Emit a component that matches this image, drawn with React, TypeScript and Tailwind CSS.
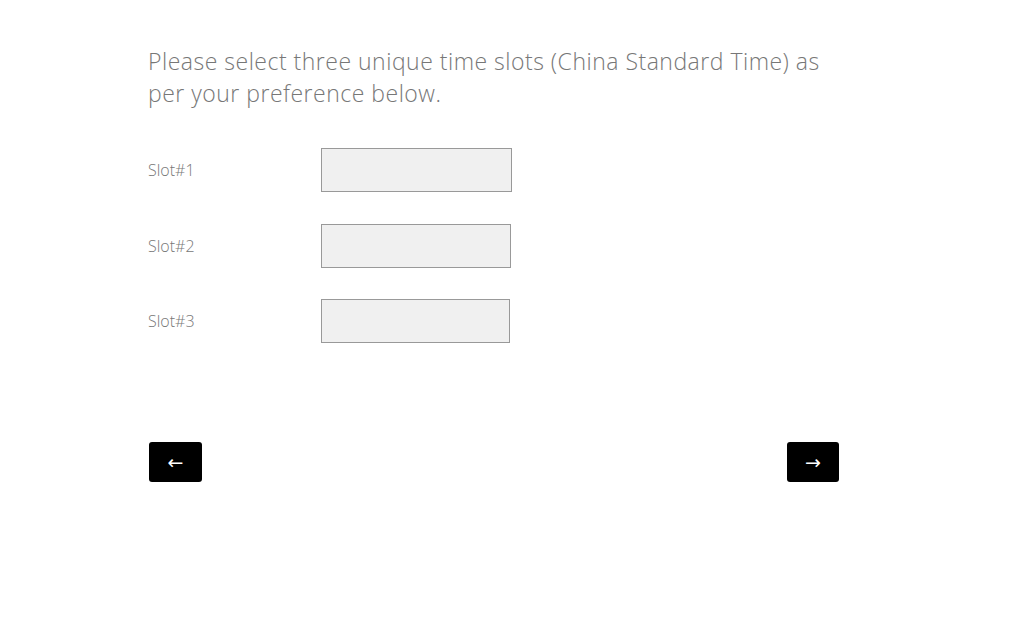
export default function App() {
  const slots = [
    { label: 'Slot#1', w: 'w-[191px]' },
    { label: 'Slot#2', w: 'w-[190px]' },
    { label: 'Slot#3', w: 'w-[189px]' },
  ];

  return (
    <div className="min-h-[621px] bg-white font-['Open_Sans',sans-serif] text-[#777]">
      <div className="ml-[148px] w-[691px] pt-[45px]">
        <h1 className="text-[23px] leading-[32px] font-light tracking-[0.5px]">
          Please select three unique time slots (China Standard Time) as per your preference below.
        </h1>

        <div className="mt-[39px] flex flex-col gap-[31.5px]">
          {slots.map((s) => (
            <div key={s.label} className="flex items-center">
              <label className="w-[173px] text-[16px] font-light">{s.label}</label>
              <input
                type="text"
                className={`${s.w} h-[44px] border border-[#999] bg-[#f0f0f0] outline-none`}
              />
            </div>
          ))}
        </div>

        <div className="mt-[99px] flex justify-between">
          <button className="ml-px flex h-[40px] w-[53px] items-center justify-center rounded-[3px] bg-black font-['DejaVu_Sans',sans-serif] text-[19px] text-white">
            ←
          </button>
          <button className="flex h-[40px] w-[52px] items-center justify-center rounded-[3px] bg-black font-['DejaVu_Sans',sans-serif] text-[19px] text-white">
            →
          </button>
        </div>
      </div>
    </div>
  );
}
